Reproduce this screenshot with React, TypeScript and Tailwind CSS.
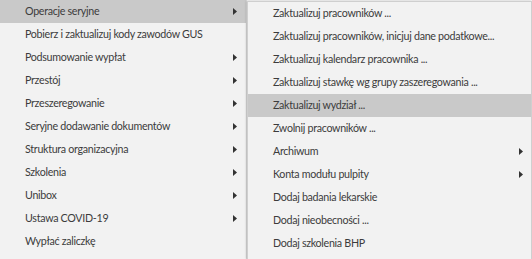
import React from "react";

const left: [string, boolean][] = [
  ["Operacje seryjne", true],
  ["Pobierz i zaktualizuj kody zawodów GUS", false],
  ["Podsumowanie wypłat", true],
  ["Przestój", true],
  ["Przeszeregowanie", true],
  ["Seryjne dodawanie dokumentów", true],
  ["Struktura organizacyjna", true],
  ["Szkolenia", true],
  ["Unibox", true],
  ["Ustawa COVID-19", true],
  ["Wypłać zaliczkę", false],
];

const right: [string, boolean][] = [
  ["Zaktualizuj pracowników ...", false],
  ["Zaktualizuj pracowników, inicjuj dane podatkowe...", false],
  ["Zaktualizuj kalendarz pracownika ...", false],
  ["Zaktualizuj stawkę wg grupy zaszeregowania ...", false],
  ["Zaktualizuj wydział ...", false],
  ["Zwolnij pracowników ...", false],
  ["Archiwum", true],
  ["Konta modułu pulpity", true],
  ["Dodaj badania lekarskie", false],
  ["Dodaj nieobecności ...", false],
  ["Dodaj szkolenia BHP", false],
];

function Arrow() {
  return (
    <svg width="4" height="7" viewBox="0 0 4 7" className="shrink-0">
      <path d="M0 0 L4 3.5 L0 7 Z" fill="#333" />
    </svg>
  );
}

export default function App() {
  return (
    <div
      className="w-[532px] h-[259px] bg-[#f2f2f2] overflow-hidden flex text-[10.7px] tracking-[-0.3px] text-[#3c3c3c]"
      style={{ fontFamily: "Lato, 'Noto Sans', sans-serif" }}
    >
      <div className="w-[247px] shrink-0 flex flex-col border-r border-[#d6d6d6]">
        {left.map(([t, a], i) => (
          <div
            key={t}
            className={`h-[23px] shrink-0 flex items-center pl-[25px] pr-[9px] ${i === 0 ? "bg-[#c9c9c9]" : ""}`}
          >
            <span className="flex-1 whitespace-nowrap">{t}</span>
            {a && <Arrow />}
          </div>
        ))}
      </div>
      <div className="w-[285px] shrink-0 mt-[1px] flex flex-col bg-[#f2f2f2] border-l border-t border-r border-[#cfcfcf] shadow-[-1px_0_2px_rgba(0,0,0,0.15)]">
        {right.map(([t, a], i) => (
          <div
            key={t}
            className={`h-[23px] shrink-0 flex items-center pl-[25px] pr-[8px] ${i === 4 ? "bg-[#c9c9c9]" : ""}`}
          >
            <span className="flex-1 whitespace-nowrap">{t}</span>
            {a && <Arrow />}
          </div>
        ))}
      </div>
    </div>
  );
}
